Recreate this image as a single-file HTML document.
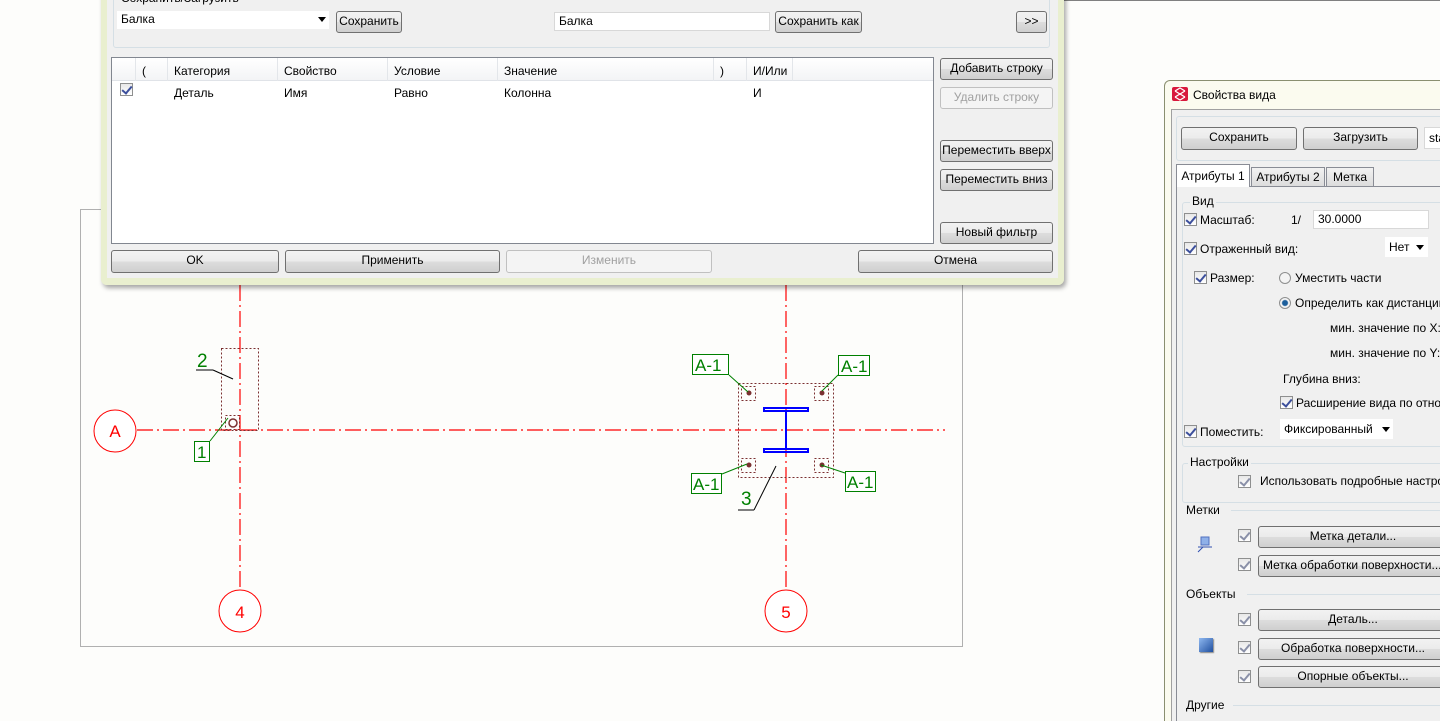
<!DOCTYPE html>
<html><head><meta charset="utf-8"><style>
*{box-sizing:border-box;margin:0;padding:0}
html{width:1440px;height:721px;overflow:hidden}
body{width:1440px;height:721px;overflow:hidden;background:#fdfdfb;position:relative;font-family:"Liberation Sans","DejaVu Sans",sans-serif;font-size:12px;color:#000}
.a{position:absolute}
.btn{position:absolute;border:1px solid #707070;border-radius:3px;background:linear-gradient(#f2f2f2,#ebebeb 50%,#dddddd 51%,#cfcfcf);text-align:center;font-size:12px;line-height:19px;white-space:nowrap;overflow:hidden}
.dis{color:#a0a0a0;border-color:#c0c0c0;background:#f4f4f4}
.inp{position:absolute;background:#fff;border:1px solid #d8d8d8;padding-left:4px;line-height:17px}
.cb{position:absolute;width:13px;height:13px;border:1px solid #8e8f8f;background:linear-gradient(#e8e8e8,#fff)}
.cb:after{content:"";position:absolute;left:3px;top:0px;width:4px;height:8px;border:solid #3c4f9c;border-width:0 2px 2px 0;transform:rotate(40deg)}
.cbd:after{border-color:#8a90a8}
.t{position:absolute;white-space:nowrap}
.hl{position:absolute;height:1px;background:#d5dfe5}
</style></head><body>

<div class="a" style="left:1063px;top:0;width:377px;height:1px;background:#808080"></div>
<div class="a" style="left:1063px;top:0;width:1px;height:90px;background:#a0a0a0"></div>

<svg class="a" style="left:0;top:0" width="1440" height="721">
<rect x="80.5" y="209.5" width="882" height="437" fill="#fdfdfb" stroke="#b0b0b0"/>
<g stroke="#f00" stroke-width="1.2" fill="none" stroke-dasharray="16,4,2,4">
<line x1="137" y1="430" x2="945" y2="430"/>
<line x1="240" y1="285" x2="240" y2="590"/>
<line x1="786" y1="285" x2="786" y2="590"/>
</g>
<g stroke="#f00" fill="#fff">
<circle cx="115" cy="431" r="21"/>
<circle cx="240" cy="611" r="21"/>
<circle cx="786" cy="611" r="21"/>
</g>
<g fill="#f00" font-family="Liberation Sans" font-size="17" text-anchor="middle">
<text x="115" y="437">A</text><text x="240" y="618">4</text><text x="786" y="618">5</text>
</g>
<g stroke="#7a3030" fill="none" stroke-dasharray="2,2">
<rect x="221.5" y="348.5" width="37" height="82"/>
<rect x="225.5" y="415.5" width="14" height="14"/>
<rect x="738.5" y="383.5" width="95" height="94"/>
<rect x="741.5" y="386.5" width="14" height="14"/>
<rect x="814.5" y="386.5" width="14" height="14"/>
<rect x="741.5" y="458.5" width="14" height="14"/>
<rect x="814.5" y="458.5" width="14" height="14"/>
</g>
<circle cx="233" cy="423" r="4" fill="none" stroke="#7a3030" stroke-width="1.5"/>
<g fill="#7a3030"><circle cx="749" cy="393" r="2.5"/><circle cx="822" cy="393" r="2.5"/><circle cx="749" cy="465" r="2.5"/><circle cx="822" cy="465" r="2.5"/></g>
<g stroke="#008000" fill="#fff">
<rect x="194.5" y="441.5" width="15" height="20"/>
<rect x="692.5" y="354.5" width="36" height="20"/>
<rect x="838.5" y="355.5" width="31" height="20"/>
<rect x="691.5" y="473.5" width="30" height="20"/>
<rect x="845.5" y="471.5" width="30" height="20"/>
</g>
<g stroke="#008000">
<line x1="210" y1="441" x2="228" y2="418"/>
<line x1="729" y1="375" x2="748" y2="392"/>
<line x1="838" y1="375" x2="822" y2="391"/>
<line x1="722" y1="474" x2="747" y2="464"/>
<line x1="845" y1="473" x2="821" y2="465"/>
</g>
<g fill="#008000" font-family="Liberation Sans" font-size="17">
<text x="197" y="458">1</text>
<text x="695" y="371">A-1</text><text x="841" y="372">A-1</text>
<text x="693" y="490">A-1</text><text x="847" y="488">A-1</text>
<text x="197" y="367" font-size="19">2</text>
<text x="741" y="505" font-size="19">3</text>
</g>
<g stroke="#000"><line x1="196" y1="370" x2="213" y2="370"/><line x1="213" y1="370" x2="233" y2="379"/>
<line x1="738" y1="510" x2="754" y2="510"/><line x1="754" y1="510" x2="776" y2="466"/></g>
<g fill="none" stroke="#00f" stroke-width="2">
<rect x="764" y="408" width="44" height="3"/><rect x="764" y="449" width="44" height="3"/>
<line x1="786" y1="411" x2="786" y2="449"/>
</g>
</svg>

<div class="a" style="left:101px;top:-10px;width:963px;height:295px;background:#f0f0f0;border:1px solid #8a8f70;border-radius:0 0 6px 6px;box-shadow:2px 3px 5px rgba(0,0,0,.35);border-left:6px solid #e9efcf;border-right:6px solid #e9efcf;border-bottom:7px solid #e9efcf"></div>
<div class="a" style="left:113px;top:-6px;width:937px;height:54px;border:1px solid #d5dfe5;border-radius:3px"></div>
<div class="t" style="left:121px;top:-9px;color:#000">Сохранить/Загрузить</div>
<div class="inp" style="left:116px;top:10px;width:214px;height:20px;border-color:#f0f0f0">Балка</div>
<div class="a" style="left:318px;top:17px;border:4px solid transparent;border-top:5px solid #000"></div>
<div class="btn" style="left:336px;top:11px;width:66px;height:22px">Сохранить</div>
<div class="inp" style="left:554px;top:12px;width:216px;height:19px">Балка</div>
<div class="btn" style="left:775px;top:11px;width:87px;height:22px">Сохранить как</div>
<div class="btn" style="left:1016px;top:11px;width:31px;height:22px">&gt;&gt;</div>

<div class="a" style="left:111px;top:57px;width:823px;height:187px;background:#fff;border:1px solid #828790"></div>
<div class="a" style="left:112px;top:58px;width:821px;height:23px;background:linear-gradient(#fff,#f3f4f6);border-bottom:1px solid #e0e3e8"></div>
<div class="a" style="left:135px;top:58px;width:1px;height:23px;background:#e3e6ea"></div>
<div class="a" style="left:167px;top:58px;width:1px;height:23px;background:#e3e6ea"></div>
<div class="a" style="left:277px;top:58px;width:1px;height:23px;background:#e3e6ea"></div>
<div class="a" style="left:387px;top:58px;width:1px;height:23px;background:#e3e6ea"></div>
<div class="a" style="left:497px;top:58px;width:1px;height:23px;background:#e3e6ea"></div>
<div class="a" style="left:713px;top:58px;width:1px;height:23px;background:#e3e6ea"></div>
<div class="a" style="left:746px;top:58px;width:1px;height:23px;background:#e3e6ea"></div>
<div class="a" style="left:792px;top:58px;width:1px;height:23px;background:#e3e6ea"></div>
<div class="t" style="left:142px;top:64px">(</div>
<div class="t" style="left:174px;top:64px">Категория</div>
<div class="t" style="left:284px;top:64px">Свойство</div>
<div class="t" style="left:394px;top:64px">Условие</div>
<div class="t" style="left:504px;top:64px">Значение</div>
<div class="t" style="left:720px;top:64px">)</div>
<div class="t" style="left:753px;top:64px">И/Или</div>
<div class="cb" style="left:120px;top:83px"></div>
<div class="t" style="left:174px;top:86px">Деталь</div>
<div class="t" style="left:284px;top:86px">Имя</div>
<div class="t" style="left:394px;top:86px">Равно</div>
<div class="t" style="left:504px;top:86px">Колонна</div>
<div class="t" style="left:753px;top:86px">И</div>

<div class="btn" style="left:940px;top:58px;width:113px;height:22px">Добавить строку</div>
<div class="btn dis" style="left:940px;top:87px;width:113px;height:22px">Удалить строку</div>
<div class="btn" style="left:940px;top:140px;width:113px;height:22px">Переместить вверх</div>
<div class="btn" style="left:940px;top:169px;width:113px;height:22px">Переместить вниз</div>
<div class="btn" style="left:940px;top:222px;width:113px;height:22px">Новый фильтр</div>
<div class="btn" style="left:111px;top:250px;width:168px;height:23px">OK</div>
<div class="btn" style="left:285px;top:250px;width:215px;height:23px">Применить</div>
<div class="btn dis" style="left:506px;top:250px;width:206px;height:23px">Изменить</div>
<div class="btn" style="left:858px;top:250px;width:195px;height:23px">Отмена</div>

<div class="a" style="left:1164px;top:80px;width:290px;height:641px;background:#fbfbef;border:1px solid #8a8f70;border-bottom:none;border-radius:6px 6px 0 0"></div>
<svg class="a" style="left:1172px;top:87px" width="16" height="14"><rect width="16" height="14" rx="2" fill="#d8183c"/><g stroke="#fff" stroke-width="1.3" fill="none"><path d="M3 4l5 3 5-3M3 10l5-3 5 3M3 4l5-3 5 3M3 10l5 3 5-3"/></g></svg>
<div class="t" style="left:1193px;top:88px;font-size:12px">Свойства вида</div>
<div class="a" style="left:1171px;top:109px;width:280px;height:612px;background:#f0f0f0;border:1px solid #a0a0a0;border-bottom:none"></div>
<div class="a" style="left:1176px;top:116px;width:270px;height:45px;border:1px solid #d5dfe5;border-radius:3px"></div>
<div class="btn" style="left:1181px;top:127px;width:116px;height:23px">Сохранить</div>
<div class="btn" style="left:1303px;top:127px;width:115px;height:23px">Загрузить</div>
<div class="inp" style="left:1424px;top:127px;width:30px;height:22px;line-height:20px">sta</div>
<div class="a" style="left:1176px;top:186px;width:270px;height:1px;background:#898c95"></div>
<div class="a" style="left:1176px;top:164px;width:74px;height:23px;background:#fff;border:1px solid #898c95;border-bottom:none;text-align:center;line-height:22px">Атрибуты 1</div>
<div class="a" style="left:1251px;top:167px;width:74px;height:20px;background:linear-gradient(#f2f2f2,#dcdcdc);border:1px solid #898c95;text-align:center;line-height:18px">Атрибуты 2</div>
<div class="a" style="left:1326px;top:167px;width:48px;height:20px;background:linear-gradient(#f2f2f2,#dcdcdc);border:1px solid #898c95;text-align:center;line-height:18px">Метка</div>
<div class="a" style="left:1176px;top:187px;width:270px;height:534px;background:#f0f0f0;border-left:1px solid #898c95"></div>
<div class="a" style="left:1182px;top:202px;width:270px;height:245px;border:1px solid #d5dfe5;border-radius:3px"></div>
<div class="t" style="left:1190px;top:194px;background:#f0f0f0;padding:0 2px">Вид</div>
<div class="cb" style="left:1184px;top:213px"></div><div class="t" style="left:1200px;top:213px">Масштаб:</div>
<div class="t" style="left:1291px;top:213px">1/</div>
<div class="inp" style="left:1313px;top:210px;width:116px;height:19px;line-height:17px">30.0000</div>
<div class="cb" style="left:1184px;top:242px"></div><div class="t" style="left:1200px;top:242px">Отраженный вид:</div>
<div class="inp" style="left:1384px;top:236px;width:45px;height:22px;line-height:20px;border-color:#f0f0f0">Нет</div>
<div class="a" style="left:1416px;top:245px;border:4px solid transparent;border-top:5px solid #000"></div>
<div class="cb" style="left:1194px;top:271px"></div><div class="t" style="left:1210px;top:271px">Размер:</div>
<div class="a" style="left:1279px;top:272px;width:12px;height:12px;border-radius:50%;border:1px solid #8e8f8f;background:#f4f4f4"></div>
<div class="t" style="left:1295px;top:271px">Уместить части</div>
<div class="a" style="left:1279px;top:297px;width:12px;height:12px;border-radius:50%;border:1px solid #8e8f8f;background:radial-gradient(#1c5f9c 2.5px,#f4f4f4 3.5px)"></div>
<div class="t" style="left:1295px;top:296px">Определить как дистанции</div>
<div class="t" style="left:1330px;top:321px">мин. значение по X:</div>
<div class="t" style="left:1330px;top:346px">мин. значение по Y:</div>
<div class="t" style="left:1283px;top:372px">Глубина вниз:</div>
<div class="cb" style="left:1280px;top:396px"></div><div class="t" style="left:1296px;top:396px">Расширение вида по отно</div>
<div class="cb" style="left:1184px;top:425px"></div><div class="t" style="left:1200px;top:425px">Поместить:</div>
<div class="inp" style="left:1279px;top:418px;width:115px;height:22px;line-height:20px;border-color:#f0f0f0">Фиксированный</div>
<div class="a" style="left:1382px;top:427px;border:4px solid transparent;border-top:5px solid #000"></div>

<div class="a" style="left:1182px;top:463px;width:270px;height:40px;border:1px solid #d5dfe5;border-radius:3px"></div>
<div class="t" style="left:1188px;top:455px;background:#f0f0f0;padding:0 2px">Настройки</div>
<div class="cb cbd" style="left:1238px;top:475px"></div><div class="t" style="left:1260px;top:474px">Использовать подробные настро</div>
<div class="t" style="left:1186px;top:503px">Метки</div><div class="hl" style="left:1231px;top:510px;width:220px"></div>
<div class="cb cbd" style="left:1238px;top:529px"></div>
<div class="btn" style="left:1258px;top:526px;width:190px;height:22px">Метка детали...</div>
<div class="cb cbd" style="left:1238px;top:558px"></div>
<div class="btn" style="left:1258px;top:555px;width:190px;height:22px;text-align:left;padding-left:4px">Метка обработки поверхности...</div>
<svg class="a" style="left:1196px;top:536px" width="20" height="20"><rect x="5" y="1" width="8" height="8" fill="#8fb0e8" stroke="#5070c0"/><line x1="2" y1="11" x2="16" y2="11" stroke="#3050b0"/><line x1="7" y1="11" x2="2" y2="16" stroke="#3050b0"/></svg>
<div class="t" style="left:1186px;top:587px">Объекты</div><div class="hl" style="left:1247px;top:594px;width:205px"></div>
<div class="cb cbd" style="left:1238px;top:613px"></div>
<div class="btn" style="left:1258px;top:609px;width:190px;height:22px">Деталь...</div>
<div class="cb cbd" style="left:1238px;top:641px"></div>
<div class="btn" style="left:1258px;top:638px;width:190px;height:22px">Обработка поверхности...</div>
<div class="cb cbd" style="left:1238px;top:670px"></div>
<div class="btn" style="left:1258px;top:666px;width:190px;height:22px">Опорные объекты...</div>
<div class="a" style="left:1199px;top:638px;width:14px;height:14px;background:linear-gradient(135deg,#8fb8f0,#2050a0);box-shadow:1px 1px 1px #888"></div>
<div class="t" style="left:1186px;top:698px">Другие</div><div class="hl" style="left:1233px;top:705px;width:220px"></div>
</body></html>
